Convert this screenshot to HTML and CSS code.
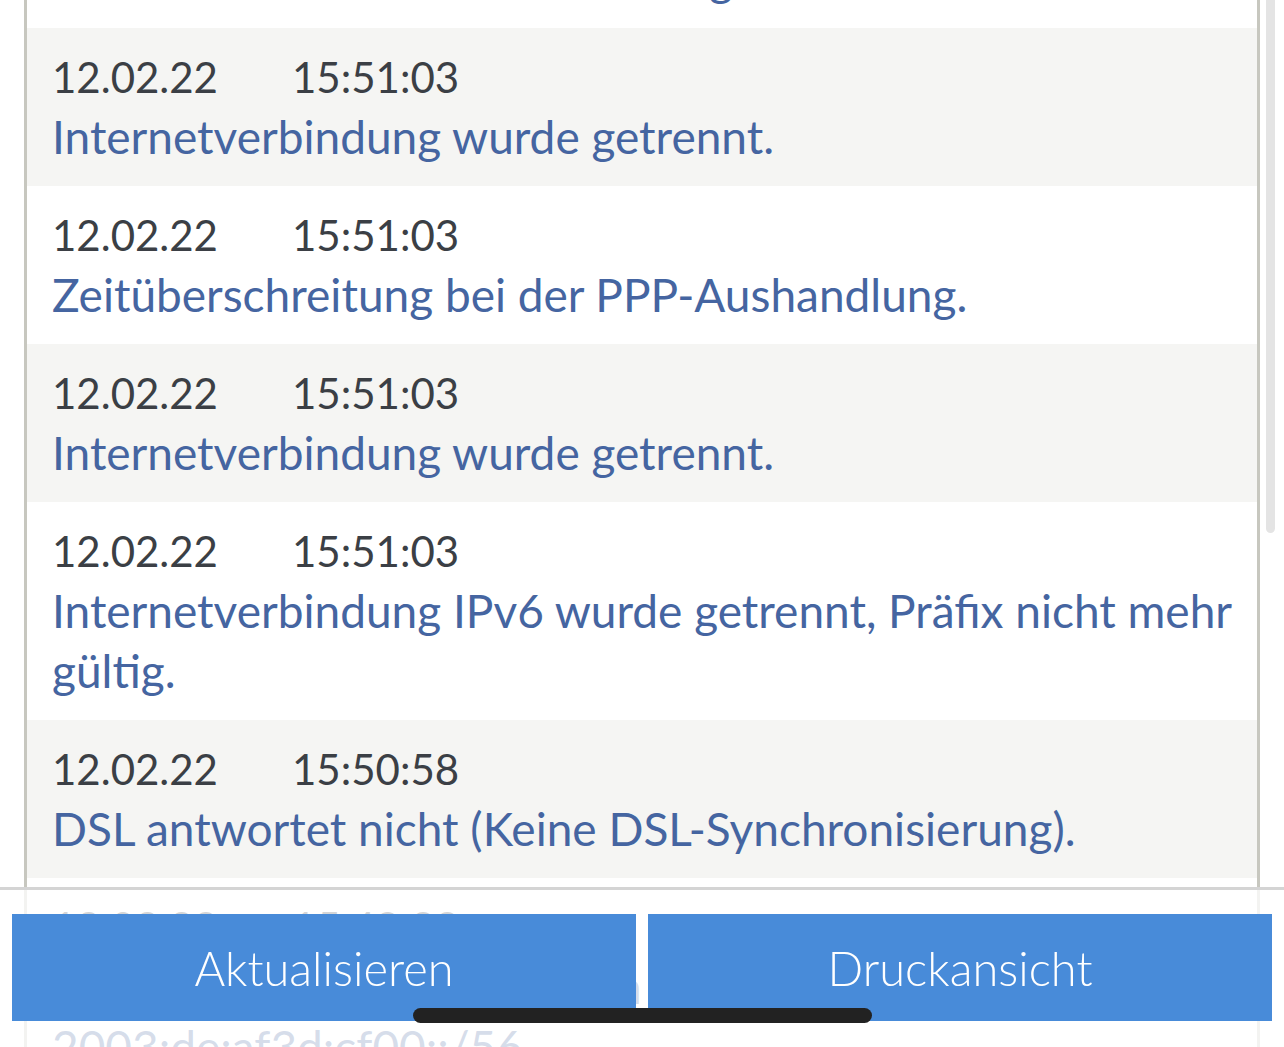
FILE: index.html
```html
<!DOCTYPE html>
<html lang="de">
<head>
<meta charset="utf-8">
<title>Ereignisse</title>
<link rel="stylesheet" href="styles.css">
</head>
<body>
<div class="view">
  <ul class="log">
    <li class="entry">
      <div class="stamp"><span class="date">12.02.22</span><span class="time">15:51:04</span></div>
      <div class="msg">PPPoE-Fehler: Zeitüberschreitung.</div>
    </li>
    <li class="entry">
      <div class="stamp"><span class="date">12.02.22</span><span class="time">15:51:03</span></div>
      <div class="msg">Internetverbindung wurde getrennt.</div>
    </li>
    <li class="entry">
      <div class="stamp"><span class="date">12.02.22</span><span class="time">15:51:03</span></div>
      <div class="msg">Zeitüberschreitung bei der PPP-Aushandlung.</div>
    </li>
    <li class="entry">
      <div class="stamp"><span class="date">12.02.22</span><span class="time">15:51:03</span></div>
      <div class="msg">Internetverbindung wurde getrennt.</div>
    </li>
    <li class="entry">
      <div class="stamp"><span class="date">12.02.22</span><span class="time">15:51:03</span></div>
      <div class="msg">Internetverbindung IPv6 wurde getrennt, Präfix nicht mehr gültig.</div>
    </li>
    <li class="entry">
      <div class="stamp"><span class="date">12.02.22</span><span class="time">15:50:58</span></div>
      <div class="msg">DSL antwortet nicht (Keine DSL-Synchronisierung).</div>
    </li>
    <li class="entry">
      <div class="stamp"><span class="date">12.02.22</span><span class="time">15:49:33</span></div>
      <div class="msg">IPv6-Präfix wurde erfolgreich bezogen. Neues Präfix: 2003:de:af3d:cf00::/56</div>
    </li>
  </ul>
  <div class="scrollbar"></div>
</div>
<footer class="actions">
  <button class="btn" type="button">Aktualisieren</button>
  <button class="btn" type="button">Druckansicht</button>
</footer>
<div class="home-indicator"></div>
</body>
</html>
```
FILE: styles.css
```css
html, body {
  margin: 0;
  padding: 0;
  height: 100%;
  overflow: hidden;
  background: #ffffff;
}

body {
  font-family: "Lato", "Liberation Sans", sans-serif;
  font-size: 46px;
  line-height: 60px;
  color: #3b3f45;
}

.view {
  position: relative;
  display: flow-root;
  height: 100%;
}

.log {
  list-style: none;
  margin: -130px 0 0 24px;
  padding: 0;
  width: 1230px;
  border-left: 3px solid #c7c7bf;
  border-right: 3px solid #c7c7bf;
}

.entry {
  padding: 19px 25px;
  background: #ffffff;
}

.entry:nth-child(even) {
  background: #f5f5f3;
}

.stamp {
  white-space: nowrap;
  font-size: 42px;
  height: 60px;
}

.date {
  display: inline-block;
  width: 240px;
}

.msg {
  color: #4565a1;
}

.scrollbar {
  position: absolute;
  top: 0;
  left: 1266px;
  width: 9px;
  height: 533px;
  background: #e4e4e4;
  border-radius: 0 0 5px 5px;
}

.actions {
  position: fixed;
  left: 0;
  right: 0;
  bottom: 0;
  box-sizing: border-box;
  border-top: 3px solid #d4d4d4;
  background: rgba(255, 255, 255, 0.78);
  display: flex;
  gap: 12px;
  padding: 24px 12px 26px 12px;
}

.btn {
  flex: 1;
  height: 107px;
  border: none;
  border-radius: 0;
  background: #488bd9;
  color: #ffffff;
  font-family: "Lato", "Liberation Sans", sans-serif;
  font-weight: 300;
  font-size: 47px;
  padding: 0;
}

.home-indicator {
  position: fixed;
  left: 413px;
  top: 1008px;
  width: 459px;
  height: 15px;
  border-radius: 8px;
  background: #222222;
}
```
